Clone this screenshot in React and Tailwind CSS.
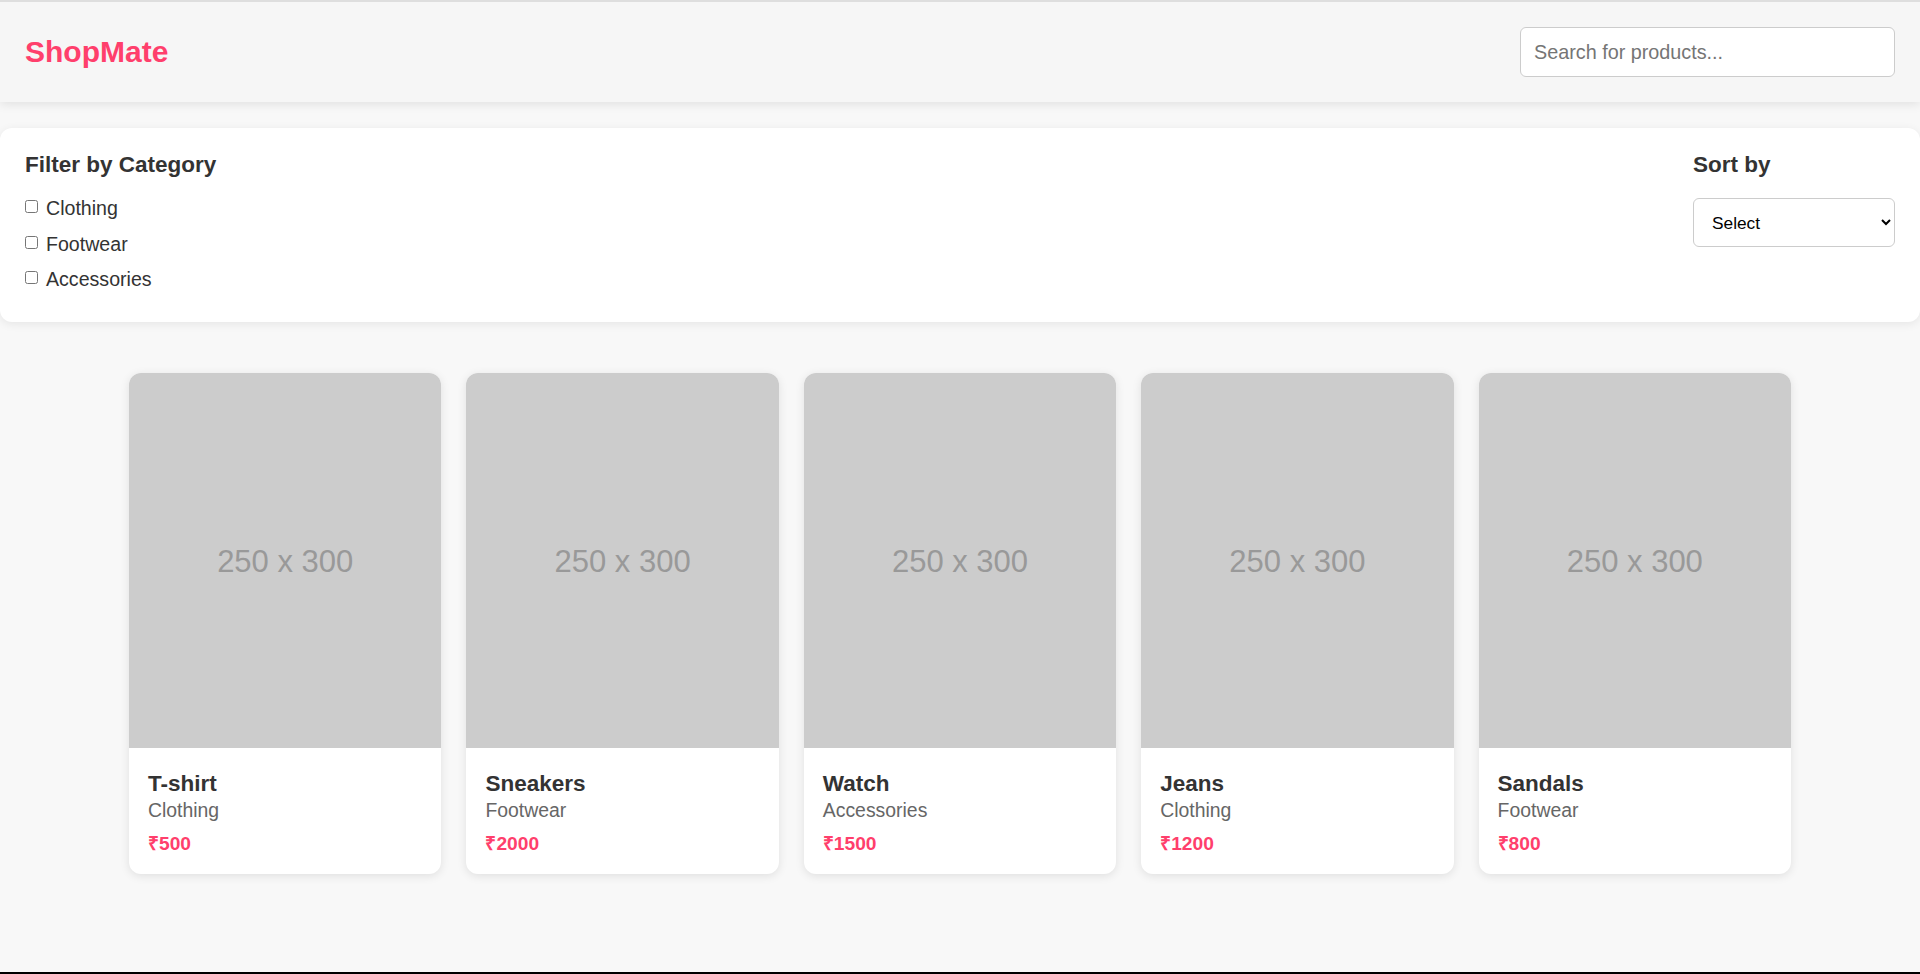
import React from 'react';

const products = [
  { name: 'T-shirt', category: 'Clothing', price: 500 },
  { name: 'Sneakers', category: 'Footwear', price: 2000 },
  { name: 'Watch', category: 'Accessories', price: 1500 },
  { name: 'Jeans', category: 'Clothing', price: 1200 },
  { name: 'Sandals', category: 'Footwear', price: 800 },
];

const categories = ['Clothing', 'Footwear', 'Accessories'];

// ==================== HEADER ====================
const Header = () => (
  <header className="h-[102px] border-t-2 border-[#dedede] bg-[#f6f6f6] shadow-[0_2px_10px_rgba(0,0,0,0.1)] flex items-center justify-between pl-[25px] pr-[25px]">
    <h1 className="text-[30px] font-bold text-[#ff3f6c] leading-none">ShopMate</h1>
    <input
      type="text"
      placeholder="Search for products..."
      className="w-[375px] h-[50px] bg-white border border-[#ccc] rounded-[6px] pl-[13px] pr-3 text-[19.8px] text-[#333] placeholder:text-[#757575] outline-none"
    />
  </header>
);

// ==================== FILTERS ====================
const Filters = () => (
  <section className="mt-[26px] bg-white rounded-xl shadow-[0_2px_10px_rgba(0,0,0,0.08)] flex justify-between pl-[25px] pr-[25px] pt-[24px] pb-[24px]">
    <div>
      <h3 className="text-[22.5px] font-bold leading-[26px] text-[#333]">Filter by Category</h3>
      <div className="mt-[13px] flex flex-col">
        {categories.map((c) => (
          <label key={c} className="h-[35.5px] flex items-center text-[19.6px] text-[#333]">
            <input type="checkbox" className="m-0 mr-[8px] mb-[4px] w-[13px] h-[13px]" />
            {c}
          </label>
        ))}
      </div>
    </div>
    <div className="w-[202px]">
      <h3 className="text-[22.5px] font-bold leading-[26px] text-[#333]">Sort by</h3>
      <select className="mt-[20px] w-[202px] h-[49px] bg-white border border-[#ccc] rounded-[6px] pl-[14px] pr-[6px] text-[17.3px] text-black outline-none">
        <option>Select</option>
        <option>Price: Low to High</option>
        <option>Price: High to Low</option>
      </select>
    </div>
  </section>
);

// ==================== PRODUCT CARD ====================
const ProductCard = ({ name, category, price }) => (
  <div className="w-[312.4px] bg-white rounded-xl overflow-hidden shadow-[0_2px_10px_rgba(0,0,0,0.1)]">
    <div className="h-[375px] bg-[#cccccc] flex items-center justify-center pt-[4px]">
      <span className="text-[31px] text-[#999]">250 x 300</span>
    </div>
    <div className="px-[19px] pt-[23px] pb-[19px]">
      <h3 className="text-[22.5px] font-bold leading-[26px] text-[#333]">{name}</h3>
      <p className="mt-[2px] text-[19.4px] leading-[22px] text-[#666]">{category}</p>
      <p className="mt-[12px] text-[19.2px] font-bold leading-[22px] text-[#ff3f6c]">₹{price}</p>
    </div>
  </div>
);

export default function App() {
  return (
    <div className="min-h-[974px] flex flex-col bg-[#f8f8f8] font-['Liberation_Sans',Arial,sans-serif]">
      <Header />
      <main className="flex-1">
        <Filters />
        <div className="mt-[51px] flex justify-center gap-[25px]">
          {products.map((p) => (
            <ProductCard key={p.name} {...p} />
          ))}
        </div>
      </main>
      <div className="h-[2px] bg-black" />
    </div>
  );
}
